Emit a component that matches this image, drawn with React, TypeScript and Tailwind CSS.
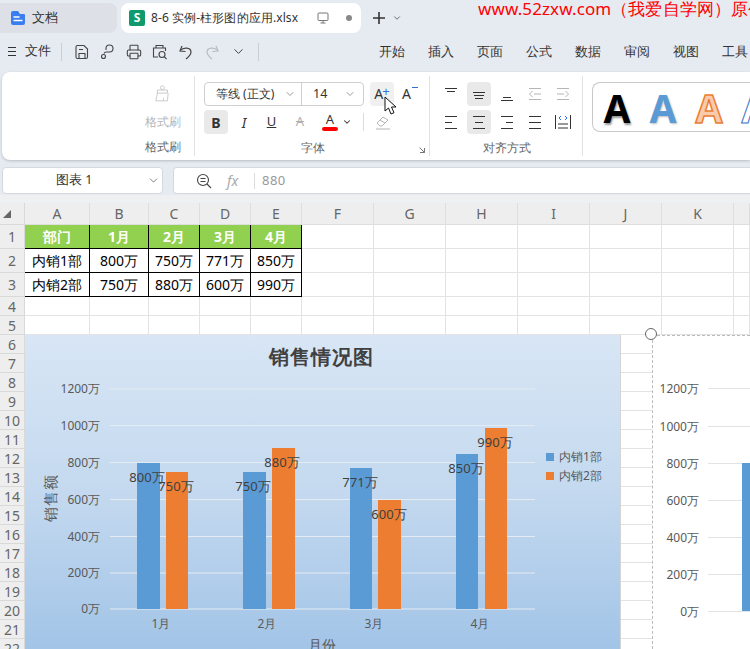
import { ChevronDown, Printer } from "lucide-react";

const cols = ["A", "B", "C", "D", "E", "F", "G", "H", "I", "J", "K", ""];
const table = [
  ["部门", "1月", "2月", "3月", "4月"],
  ["内销1部", "800万", "750万", "771万", "850万"],
  ["内销2部", "750万", "880万", "600万", "990万"],
];
const rowNums = Array.from({ length: 22 }, (_, i) => i + 1);
const menus = ["开始", "插入", "页面", "公式", "数据", "审阅", "视图", "工具"];

const ticks = [
  ["1200万", 389],
  ["1000万", 425.5],
  ["800万", 462.5],
  ["600万", 499.5],
  ["400万", 536.5],
  ["200万", 573],
  ["0万", 609],
] as const;

const ticks2 = [
  ["1200万", 387.5],
  ["1000万", 425.5],
  ["800万", 462.5],
  ["600万", 499.5],
  ["400万", 536.5],
  ["200万", 573.5],
  ["0万", 610.5],
] as const;

const bars = [
  { x: 137, w: 23, top: 463, fill: "#5b9bd5", label: "800万", lx: 147, ly: 478 },
  { x: 166, w: 22, top: 472, fill: "#ed7d31", label: "750万", lx: 176, ly: 487 },
  { x: 243, w: 23, top: 472, fill: "#5b9bd5", label: "750万", lx: 253, ly: 487 },
  { x: 272, w: 23, top: 448, fill: "#ed7d31", label: "880万", lx: 282, ly: 463 },
  { x: 350, w: 22, top: 468, fill: "#5b9bd5", label: "771万", lx: 360, ly: 483 },
  { x: 378, w: 23, top: 500, fill: "#ed7d31", label: "600万", lx: 389, ly: 515 },
  { x: 456, w: 22, top: 454, fill: "#5b9bd5", label: "850万", lx: 466, ly: 469 },
  { x: 485, w: 22, top: 428, fill: "#ed7d31", label: "990万", lx: 495, ly: 443 },
];

// horizontal line glyphs for the alignment buttons: [x1, x2, y]
const Lines = ({ lines, color = "#333" }: { lines: number[][]; color?: string }) => (
  <svg width="16" height="16" viewBox="0 0 16 16" fill="none" stroke={color} strokeWidth="1">
    {lines.map((l, i) => (
      <line key={i} x1={l[0]} x2={l[1]} y1={l[2] + 0.5} y2={l[2] + 0.5} />
    ))}
  </svg>
);

const AlignBtn = ({ active, children }: { active?: boolean; children: React.ReactNode }) => (
  <div className={`flex h-6 w-6 items-center justify-center rounded ${active ? "bg-[#e9e9e9]" : ""}`}>{children}</div>
);

const SaveIcon = () => (
  <svg width="16" height="16" viewBox="0 0 16 16" fill="none" stroke="#444" strokeWidth="1.1">
    <path d="M3.500 1.500h6.500l3.500 3.500v8a1.500 1.500 0 0 1-1.500 1.500H3.500A1.500 1.500 0 0 1 2 13V3a1.500 1.500 0 0 1 1.500-1.500z" />
    <path d="M5 14.500V9.500h6v5M5 5.500h4" />
  </svg>
);

const KeyIcon = () => (
  <svg width="16" height="16" viewBox="0 0 16 16" fill="none" stroke="#444" strokeWidth="1.1">
    <path d="M6 6V4.500a3.500 3.500 0 1 1 3.500 3.500H6.500A2.500 2.500 0 0 0 4 9.500" />
    <circle cx="3.500" cy="12.500" r="2" />
  </svg>
);

const PreviewIcon = () => (
  <svg width="16" height="16" viewBox="0 0 16 16" fill="none" stroke="#444" strokeWidth="1.1">
    <path d="M4 4V1.500h7V4M6 13H1.500V4h12v3" />
    <circle cx="10" cy="10.500" r="3" />
    <path d="M12.200 12.700l2.300 2.300" />
  </svg>
);

const UndoIcon = ({ color, flip }: { color: string; flip?: boolean }) => (
  <svg className={flip ? "-scale-x-100" : ""} width="16" height="16" viewBox="0 0 16 16" fill="none" stroke={color} strokeWidth="1.2">
    <path d="M4 2L2 7l5.500 .5" />
    <path d="M2.500 6.500C5 3 13 3 13 8c0 3-2.500 5-5 7" />
  </svg>
);

const Arrow = ({ dir, color }: { dir: "left" | "right"; color: string }) => (
  <svg width="16" height="16" viewBox="0 0 16 16" fill="none" stroke={color} strokeWidth="1">
    <path d="M2 2.500h12M2 13.500h12" />
    {dir === "left" ? <path d="M7 8h7M5.500 5L2.500 8l3 3" /> : <path d="M2 8h7M10.500 5l3 3-3 3" />}
  </svg>
);

export default function App() {
  return (
    <div className="h-[649px] w-[750px] overflow-hidden bg-[#e6eaf1] text-[#333] [font-family:'Noto_Sans_CJK_SC',sans-serif]">
      {/* title tabs */}
      <div className="flex h-[33px] items-end">
        <div className="flex h-[30px] w-[117px] shrink-0 items-center gap-[6px] rounded-r-lg bg-[#dde1e7] pl-[10px] text-[12.5px]">
          <svg width="16" height="16" viewBox="0 0 16 16">
            <path d="M1 3a2 2 0 0 1 2-2h5l2 3h4a1 1 0 0 1 1 1v8a2 2 0 0 1-2 2H3a2 2 0 0 1-2-2z" fill="#3a7df0" />
            <path d="M3.500 7h6M3.500 10.500h9" stroke="#fff" strokeWidth="1.400" />
          </svg>
          文档
        </div>
        <div className="ml-1 flex h-[30px] w-[240px] shrink-0 items-center rounded-lg bg-white pl-2 text-[12px] tracking-[0.1px]">
          <div className="flex h-4 w-4 items-center justify-center rounded-[2px] bg-[#0f9a6c] text-[12px] font-bold leading-none text-white">S</div>
          <span className="ml-[6px] w-[148px] whitespace-nowrap">8-6 实例-柱形图的应用.xlsx</span>
          <svg className="ml-[18px]" width="12" height="12" viewBox="0 0 12 12" fill="none" stroke="#777" strokeWidth="1">
            <rect x="1" y="1" width="10" height="7.500" rx="1" />
            <path d="M3.500 11h5M6 8.500V11" />
          </svg>
          <div className="ml-[17px] h-[6px] w-[6px] rounded-full bg-[#888]" />
        </div>
        <div className="ml-[11px] flex h-[30px] shrink-0 items-center">
          <svg width="14" height="14" viewBox="0 0 14 14" stroke="#333" strokeWidth="1.600">
            <path d="M7 1v12M1 7h12" />
          </svg>
          <ChevronDown className="ml-[6px] h-[10px] w-[10px] text-[#555]" strokeWidth={2} />
        </div>
        <div className="ml-[76px] h-[33px] min-w-0 flex-1 self-start overflow-hidden whitespace-nowrap text-[17px] leading-[17px] tracking-[0.1px] text-[#ff0000]">
          www.52zxw.com（我爱自学网）原创
        </div>
      </div>

      {/* quick access + menu */}
      <div className="flex h-[37px] items-center text-[13px]">
        <div className="ml-2 flex w-[17px] shrink-0 flex-col gap-[3px]">
          <div className="h-px w-2 bg-[#333]" />
          <div className="h-px w-2 bg-[#333]" />
          <div className="h-px w-2 bg-[#333]" />
        </div>
        <span className="w-[36px] shrink-0 whitespace-nowrap text-[12.5px]">文件</span>
        <div className="h-[18px] w-px shrink-0 bg-[#c9cdd3]" />
        <div className="ml-[7px] flex shrink-0">
          <div className="flex w-[26px] justify-center"><SaveIcon /></div>
          <div className="flex w-[26px] justify-center"><KeyIcon /></div>
          <div className="flex w-[26px] justify-center"><Printer className="h-4 w-4 text-[#444]" strokeWidth={1.6} /></div>
          <div className="flex w-[26px] justify-center"><PreviewIcon /></div>
          <div className="flex w-[26px] justify-center"><UndoIcon color="#444" /></div>
          <div className="flex w-[26px] justify-center"><UndoIcon color="#b9bcc1" flip /></div>
          <div className="flex w-[26px] justify-center"><ChevronDown className="h-[15px] w-[15px] text-[#444]" strokeWidth={1.6} /></div>
        </div>
        <div className="ml-[7px] h-[18px] w-px shrink-0 bg-[#c9cdd3]" />
        <div className="ml-[120px] flex shrink-0">
          {menus.map((m) => (
            <span key={m} className="w-[49px] shrink-0 whitespace-nowrap">{m}</span>
          ))}
        </div>
      </div>

      {/* ribbon */}
      <div className="ml-[2px] mt-[2px] flex h-[88px] rounded-l-lg bg-white shadow-[0_1px_3px_rgba(0,0,0,0.2)]">
        <div className="my-[4px] flex w-[193px] shrink-0 flex-col items-end border-r border-[#e2e2e2] pr-[14px] text-[12px] text-[#b5b5b5]">
          <svg className="mr-[9px] mt-[9px]" width="18" height="22" viewBox="0 0 18 22" fill="none" stroke="#bdbdbd" strokeWidth="1">
            <circle cx="9.500" cy="3.500" r="2.500" />
            <path d="M3 6.500h13v4H3zM3 10.500L1 20.500h15l1-10M10 20.500l1.500-4" strokeLinejoin="round" />
          </svg>
          <span className="mt-[11px] w-[35px] whitespace-nowrap">格式刷</span>
          <span className="mt-[7px] w-[35px] whitespace-nowrap text-[#666]">格式刷</span>
        </div>

        <div className="relative my-[4px] flex w-[235px] shrink-0 flex-col border-r border-[#e2e2e2] pl-[9px]">
          <div className="mt-[6px] flex h-6 items-center">
            <div className="flex h-6 w-[160px] items-center rounded border border-[#cfcfcf] text-[12px]">
              <span className="w-[72px] whitespace-nowrap pl-[11px] text-[12px]">等线 (正文)</span>
              <ChevronDown className="ml-[7px] h-3 w-3 text-[#777]" strokeWidth={1.5} />
              <div className="ml-[5px] h-full w-px bg-[#cfcfcf]" />
              <span className="ml-[11px] w-[27px] text-[12.5px]">14</span>
              <ChevronDown className="ml-[4px] h-3 w-3 text-[#777]" strokeWidth={1.5} />
            </div>
            <div className="ml-[6px] flex h-6 w-6 items-start justify-center rounded bg-[#f0f0f0] text-[14px] leading-6 [font-family:'Liberation_Sans',sans-serif]">
              A<span className="-ml-px -mt-[3px] text-[13px] text-[#2f6fe0]">+</span>
            </div>
            <div className="ml-1 flex h-6 w-6 items-start justify-center text-[14px] leading-6 [font-family:'Liberation_Sans',sans-serif]">
              A<span className="ml-px mt-[5px] h-px w-[6px] bg-[#2f6fe0]" />
            </div>
          </div>
          <div className="mt-1 flex h-6 items-center [font-family:'Liberation_Sans',sans-serif]">
            <div className="flex h-6 w-6 items-center justify-center rounded bg-[#e9e9e9] text-[14px] font-bold">B</div>
            <span className="ml-[2px] flex w-[28px] justify-center text-[14px] italic">I</span>
            <span className="flex w-[27px] justify-center text-[13px] underline">U</span>
            <span className="flex w-[30px] justify-center text-[13px] text-[#b0b0b0] line-through">A</span>
            <div className="ml-[3px] flex w-[24px] flex-col items-center text-[13px] leading-[13px]">
              A
              <div className="mt-[1px] h-[4px] w-4 rounded-sm bg-[#ff0000]" />
            </div>
            <ChevronDown className="h-[10px] w-[10px]" strokeWidth={2.5} />
            <div className="ml-[11px] h-[18px] w-px bg-[#dcdcdc]" />
            <svg className="ml-[11px]" width="16" height="16" viewBox="0 0 16 16" fill="none" stroke="#b5b5b5" strokeWidth="1">
              <path d="M2 9l6-6 5 3-6 6H5zM5 6l5 3M1 15h14" />
            </svg>
          </div>
          <div className="mt-[5px] w-[218px] text-center text-[12px] text-[#666]">字体</div>
          <svg className="absolute bottom-[3px] right-[4px]" width="6" height="6" viewBox="0 0 6 6" fill="none" stroke="#777" strokeWidth="1">
            <path d="M0.500 0.500l5 5M5.500 1v4.500H1" />
          </svg>
          {/* mouse pointer over A+ */}
          <svg className="absolute left-[189px] top-[20px]" width="14" height="20" viewBox="0 0 14 20" fill="#fff" stroke="#111" strokeWidth="1">
            <path d="M1 1v14l3.500-3 2.500 6 3-1.300-2.500-5.700H12z" />
          </svg>
        </div>

        <div className="my-[4px] flex w-[153px] shrink-0 flex-col border-r border-[#e2e2e2] pl-[9px]">
          <div className="mt-[6px] flex gap-1">
            <AlignBtn><Lines lines={[[2, 14, 2], [4, 12, 5]]} /></AlignBtn>
            <AlignBtn active><Lines lines={[[2, 14, 6], [3, 13, 9], [4, 12, 12]]} /></AlignBtn>
            <AlignBtn><Lines lines={[[4, 12, 11], [2, 14, 14]]} /></AlignBtn>
            <AlignBtn><Arrow dir="left" color="#b5b5b5" /></AlignBtn>
            <AlignBtn><Arrow dir="right" color="#b5b5b5" /></AlignBtn>
          </div>
          <div className="mt-1 flex gap-1">
            <AlignBtn><Lines lines={[[2, 14, 2], [2, 9, 8], [2, 14, 14]]} /></AlignBtn>
            <AlignBtn active><Lines lines={[[2, 14, 2], [4, 12, 8], [2, 14, 14]]} /></AlignBtn>
            <AlignBtn><Lines lines={[[2, 14, 2], [7, 14, 8], [2, 14, 14]]} /></AlignBtn>
            <AlignBtn><Lines lines={[[2, 14, 2], [2, 14, 8], [2, 14, 14]]} /></AlignBtn>
            <AlignBtn>
              <svg width="16" height="16" viewBox="0 0 16 16" fill="none" strokeWidth="1">
                <path d="M0.500 1v14M15.500 1v14M3 10h10M3 14h10" stroke="#333" />
                <path d="M6 2L4 4l2 2M10 2l2 2-2 2" stroke="#2f6fe0" />
              </svg>
            </AlignBtn>
          </div>
          <div className="mt-[5px] w-[136px] text-center text-[12px] text-[#666]">对齐方式</div>
        </div>

        <div className="ml-[9px] mt-[10px] flex h-[50px] flex-1 items-center overflow-hidden rounded-l-lg border border-r-0 border-[#c8c8c8] text-[39px] font-bold leading-none [font-family:'Liberation_Sans',sans-serif]">
          <span className="ml-[1px] w-[46px] shrink-0 text-center text-black [text-shadow:1px_2px_2px_rgba(0,0,0,0.4)]">A</span>
          <span className="w-[46px] shrink-0 text-center text-[#5b9bd5] [text-shadow:1px_1px_2px_rgba(0,0,0,0.25)]">A</span>
          <span className="w-[46px] shrink-0 text-center text-[#f8cbad] [-webkit-text-stroke:1.5px_#ed7d31]">A</span>
          <span className="w-[46px] shrink-0 text-center text-white [-webkit-text-stroke:1px_#4472c4]">A</span>
        </div>
      </div>

      {/* formula bar */}
      <div className="ml-[2px] mt-[7px] flex h-[27px] items-center">
        <div className="flex h-[27px] w-[161px] shrink-0 items-center rounded border border-[#d5d8dc] bg-white pl-[53px] text-[12.5px]">
          <span className="w-[91px]">图表 1</span>
          <ChevronDown className="h-[13px] w-[13px] text-[#666]" strokeWidth={1.5} />
        </div>
        <div className="ml-[10px] flex h-[27px] flex-1 items-center rounded-l border border-r-0 border-[#d5d8dc] bg-white pl-[22px] text-[13px]">
          <svg width="16" height="16" viewBox="0 0 16 16" fill="none" stroke="#444" strokeWidth="1.100">
            <circle cx="7" cy="7" r="5.500" />
            <path d="M11 11l4 4M4.500 5.500h5M4.500 8.500h5" />
          </svg>
          <span className="ml-[15px] w-[16px] text-[14px] italic text-[#aaa] [font-family:'Liberation_Serif',serif]">fx</span>
          <div className="ml-[11px] h-4 w-px bg-[#ddd]" />
          <span className="ml-[7px] tracking-[0.5px] text-[#999]">880</span>
        </div>
      </div>
      <div className="mt-px h-[8px] bg-[#eff0f2]" />

      {/* sheet */}
      <div className="relative h-[446px] bg-white">
        <div className="grid grid-cols-[25px_65px_59px_51px_51px_51px_72px_72px_72px_72px_72px_72px_16px] grid-rows-[22px_24px_24px_24px_19px_19px_repeat(17,19px)] [font-family:'Open_Sans','Noto_Sans_CJK_SC',sans-serif]">
          <div className="relative border-b border-r border-[#d9d9d9] bg-[#eeeeee]">
            <div className="absolute left-[3px] top-[7px] h-0 w-0 border-b-[8px] border-l-[8px] border-b-[#666] border-l-transparent" />
          </div>
          {cols.map((c) => (
            <div key={c} className="flex items-center justify-center border-b border-r border-[#dedede] bg-[#eeeeee] text-[14px] text-[#666]">
              {c}
            </div>
          ))}
          {rowNums.map((n) => (
            <div key={n} className="contents">
              <div className="flex items-center justify-center overflow-hidden border-b border-r border-[#d9d9d9] bg-[#eeeeee] text-[14px] text-[#666]">
                {n}
              </div>
              {cols.map((c, i) => {
                const text = n <= 3 ? table[n - 1][i] : undefined;
                if (text === undefined)
                  return <div key={c} className="border-b border-r border-[#e3e3e3]" />;
                return (
                  <div
                    key={c}
                    className={`flex items-center justify-center whitespace-nowrap border-b border-r border-black text-[14px] ${
                      n === 1 ? "bg-[#92d050] font-bold text-white" : "text-black"
                    }`}
                  >
                    {text}
                  </div>
                );
              })}
            </div>
          ))}
        </div>

        {/* selected chart, cut off by the window */}
        <div className="absolute left-[652px] top-[132px] h-[314px] w-[98px] border-l border-t border-dashed border-[#bbb] bg-white pl-px">
          <svg width="97" height="314" viewBox="653 335 97 314" className="[font-family:'Open_Sans','Noto_Sans_CJK_SC',sans-serif]">
            {ticks2.map(([t, y]) => (
              <g key={t}>
                <line x1="707" x2="750" y1={y} y2={y} stroke="#e3e3e3" />
                <text x="698" y={y + 4} textAnchor="end" fontSize="12" fill="#595959">{t}</text>
              </g>
            ))}
            <rect x="741" y="462" width="9" height="148" fill="#5b9bd5" />
          </svg>
        </div>
        <div className="absolute left-[645px] top-[125px] h-3 w-3 rounded-full border border-[#666] bg-white" />

        {/* chart */}
        <div className="absolute left-[25px] top-[132px] h-[314px] w-[596px] border-r border-[#d4d4d4] bg-gradient-to-b from-[#d8e6f5] via-[#c4d9ef] to-[#a2c4e7]">
          <svg width="595" height="314" viewBox="25 335 595 314" className="[font-family:'Open_Sans','Noto_Sans_CJK_SC',sans-serif]">
            <text x="321" y="364" textAnchor="middle" fontSize="20" fontWeight="700" letterSpacing="1" fill="#404040">销售情况图</text>
            {ticks.map(([t, y]) => (
              <g key={t}>
                <line x1="110" x2="535" y1={y} y2={y} stroke="#e4ebf3" />
                <text x="100" y={y + 4} textAnchor="end" fontSize="12" fill="#595959">{t}</text>
              </g>
            ))}
            {bars.map((b) => (
              <rect key={b.x} x={b.x} y={b.top} width={b.w} height={609 - b.top} fill={b.fill} />
            ))}
            {bars.map((b) => (
              <text key={b.x} x={b.lx} y={b.ly + 4} textAnchor="middle" fontSize="13" fill="#404040">{b.label}</text>
            ))}
            {["1月", "2月", "3月", "4月"].map((m, i) => (
              <text key={m} x={[161, 267, 374, 480][i]} y="628" textAnchor="middle" fontSize="12" fill="#595959">{m}</text>
            ))}
            <text x="322" y="650" textAnchor="middle" fontSize="14" fill="#595959">月份</text>
            <text x="0" y="0" transform="translate(56 498) rotate(-90)" textAnchor="middle" fontSize="15" letterSpacing="1" fill="#595959">销售额</text>
            <rect x="546" y="453" width="8" height="8" fill="#5b9bd5" />
            <text x="559" y="461" fontSize="12" fill="#595959">内销1部</text>
            <rect x="546" y="472" width="8" height="8" fill="#ed7d31" />
            <text x="559" y="480" fontSize="12" fill="#595959">内销2部</text>
          </svg>
        </div>
      </div>
    </div>
  );
}
